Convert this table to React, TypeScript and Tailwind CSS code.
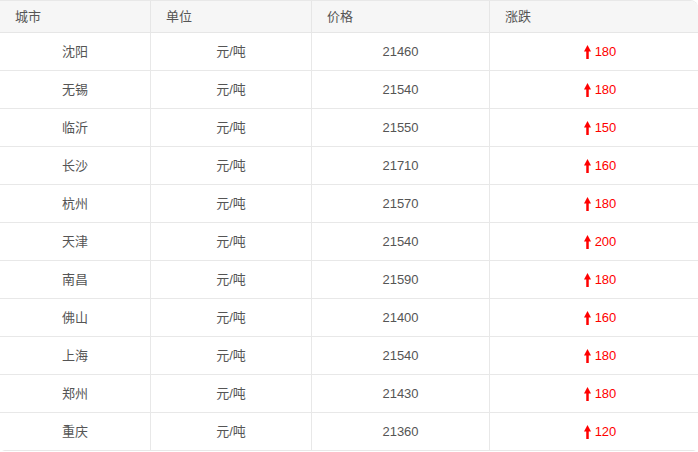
import React from "react";

const rows: [string, string, string][] = [
  ["沈阳", "21460", "180"],
  ["无锡", "21540", "180"],
  ["临沂", "21550", "150"],
  ["长沙", "21710", "160"],
  ["杭州", "21570", "180"],
  ["天津", "21540", "200"],
  ["南昌", "21590", "180"],
  ["佛山", "21400", "160"],
  ["上海", "21540", "180"],
  ["郑州", "21430", "180"],
  ["重庆", "21360", "120"],
];

function Arrow() {
  return (
    <svg width="7" height="14" viewBox="0 0 7 14" className="block">
      <polygon points="3.5,0 7,6.5 0,6.5" fill="#ff0000" />
      <rect x="2.25" y="5" width="2.5" height="9" fill="#ff0000" />
    </svg>
  );
}

export default function App() {
  return (
    <div
      className="w-[698px] h-[452px] bg-white"
      style={{ fontFamily: '"Liberation Sans", Arial, "Noto Sans CJK SC", sans-serif' }}
    >
      <div className="w-[698px] border-t border-[#e8e8e8] rounded-tr-[8px] rounded-b-[5px] overflow-hidden text-[13px] text-[#555]">
        <div className="grid grid-cols-[151px_161px_178px_1fr] h-[32px] bg-[#f6f6f6] border-b border-[#e6e6e6]">
          <div className="border-r border-[#e6e6e6] pl-[15px] flex items-center">城市</div>
          <div className="border-r border-[#e6e6e6] pl-[15px] flex items-center">单位</div>
          <div className="border-r border-[#e6e6e6] pl-[15px] flex items-center">价格</div>
          <div className="pl-[15px] flex items-center">涨跌</div>
        </div>
        {rows.map(([city, price, chg], i) => (
          <div
            key={i}
            className="grid grid-cols-[151px_161px_178px_1fr] h-[38px] border-b border-[#e8e8e8]"
          >
            <div className="border-r border-[#e8e8e8] flex items-center justify-center">{city}</div>
            <div className="border-r border-[#e8e8e8] flex items-center justify-center">元/吨</div>
            <div className="border-r border-[#e8e8e8] flex items-center justify-center">{price}</div>
            <div className="flex items-center justify-center pl-[12px] gap-[4px] text-[#ff0000]">
              <Arrow />
              <span>{chg}</span>
            </div>
          </div>
        ))}
      </div>
    </div>
  );
}
